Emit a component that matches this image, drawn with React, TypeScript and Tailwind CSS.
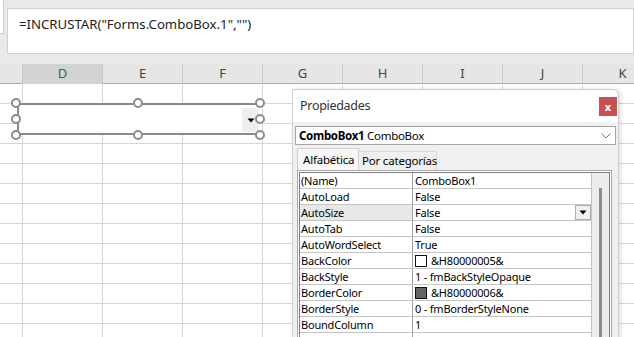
import React from "react";

const columns = ["", "D", "E", "F", "G", "H", "I", "J", "K"];

type Prop = { name: string; value: string; swatch?: string; selected?: boolean };

const props: Prop[] = [
  { name: "(Name)", value: "ComboBox1" },
  { name: "AutoLoad", value: "False" },
  { name: "AutoSize", value: "False", selected: true },
  { name: "AutoTab", value: "False" },
  { name: "AutoWordSelect", value: "True" },
  { name: "BackColor", value: "&H80000005&", swatch: "#ffffff" },
  { name: "BackStyle", value: "1 - fmBackStyleOpaque" },
  { name: "BorderColor", value: "&H80000006&", swatch: "#646464" },
  { name: "BorderStyle", value: "0 - fmBorderStyleNone" },
  { name: "BoundColumn", value: "1" },
  { name: "ColumnCount", value: "1" },
];

const handles = [
  [16, 103],
  [138, 103],
  [260, 103],
  [16, 119],
  [260, 119],
  [16, 135],
  [138, 135],
  [260, 135],
];

const DropTriangle = () => (
  <svg width="8" height="5" viewBox="0 0 8 5">
    <path d="M0.5 0.5h7L4 4.5z" fill="#000" />
  </svg>
);

const App = () => {
  return (
    <div className="relative w-[634px] h-[337px] overflow-hidden bg-white font-['Noto_Sans',sans-serif] text-black">
      {/* formula bar */}
      <div className="h-[64px] bg-[#e9e9e9] flex items-start">
        <div className="w-[4px] h-[34px] bg-white border-r border-b border-[#d0d0d0]" />
        <div className="ml-[3px] mt-[8px] w-[640px] h-[46px] bg-white border border-[#d0d0d0] pl-[11px] pt-[5px] text-[13.2px] leading-[20px] text-[#222]">
          =INCRUSTAR("Forms.ComboBox.1","")
        </div>
      </div>

      {/* column headers */}
      <div className="grid grid-cols-[23px_repeat(8,80px)] h-[20px] bg-[#e6e6e6] border-b border-[#ababab] text-[13px] text-[#444]">
        {columns.map((c) => (
          <div
            key={c || "c"}
            className={`flex items-center justify-center border-r border-[#c8c8c8] ${
              c === "D" ? "bg-[#d3d3d3] text-[#217346]" : ""
            }`}
          >
            {c}
          </div>
        ))}
      </div>

      {/* cells */}
      {Array.from({ length: 13 }).map((_, r) => (
        <div key={r} className="grid grid-cols-[23px_repeat(8,80px)] h-[20px] border-b border-[#d6d6d6]">
          {columns.map((c) => (
            <div key={c || "c"} className="border-r border-[#d6d6d6]" />
          ))}
        </div>
      ))}

      {/* embedded combobox control */}
      <div className="absolute left-[17px] top-[103px] w-[243px] h-[32px] bg-white border-t-2 border-l-2 border-b-2 border-[#8a8a8a]">
        <div className="absolute right-[1px] top-[3px] w-[17px] h-[24px] bg-[#eeeeee] flex items-center justify-center">
          <DropTriangle />
        </div>
      </div>
      {handles.map(([x, y]) => (
        <div
          key={`${x}-${y}`}
          className="absolute w-[10px] h-[10px] -ml-[5px] -mt-[5px] rounded-full bg-white border-2 border-[#8c8c8c]"
          style={{ left: x, top: y }}
        />
      ))}

      {/* properties window */}
      <div className="absolute left-[292px] top-[89px] w-[327px] h-[260px] flex flex-col border border-[#cfcfcf] rounded-tr-[6px] bg-[#f0f0f0] shadow-[2px_0_4px_rgba(0,0,0,0.12)]">
        <div className="h-[32px] shrink-0 bg-white rounded-tr-[6px] flex items-center justify-between pl-[7px] pr-[1px]">
          <span className="text-[12.5px] tracking-[-0.3px] text-[#333]">Propiedades</span>
          <div className="w-[18px] h-[19px] bg-[#c75050] flex items-center justify-center text-white text-[11px] font-bold leading-none">
            x
          </div>
        </div>

        <div className="px-[2px] pt-[4px] flex flex-col shrink-0 text-[11px] tracking-[-0.2px]">
          <div className="h-[19px] shrink-0 bg-white border border-[#a5a5a5] flex items-center justify-between pl-[3px] pr-[4px] text-[11.5px] tracking-[-0.3px]">
            <span>
              <b>ComboBox1</b> ComboBox
            </span>
            <svg width="10" height="6" viewBox="0 0 10 6">
              <path d="M0.5 0.5L5 5L9.5 0.5" fill="none" stroke="#777" strokeWidth="1" />
            </svg>
          </div>

          <div className="mt-[3px] ml-[2px] flex items-end h-[22px] shrink-0 whitespace-nowrap text-[11.5px]">
            <div className="h-[22px] w-[62px] bg-[#f7f7f7] border border-b-0 border-[#d0d0d0] pl-[5px] flex items-center">
              Alfabética
            </div>
            <div className="h-[19px] w-[78px] bg-[#f0f0f0] border border-l-0 border-b-0 border-[#d9d9d9] pl-[3px] flex items-center">
              Por categorías
            </div>
          </div>

          <div className="ml-[2px] w-[315px] h-[200px] shrink-0 border border-[#a8a8a8] bg-white p-[1px]">
            <div className="h-full border border-[#7d7d7d] flex">
              <div className="w-[292px] flex flex-col">
                {props.map((p) => (
                  <div key={p.name} className="h-[16px] shrink-0 flex border-b border-[#c4c4c4] leading-[15px]">
                    <div
                      className={`w-[113px] pl-[1px] border-r border-[#a0a0a0] whitespace-nowrap overflow-hidden ${
                        p.selected ? "bg-[#e8e8e8]" : ""
                      }`}
                    >
                      {p.name}
                    </div>
                    <div className="flex-1 flex items-center pl-[2px] border-r border-[#c4c4c4] relative whitespace-nowrap">
                      {p.swatch && (
                        <span
                          className="w-[12px] h-[12px] border border-[#111] mr-[4px] shrink-0"
                          style={{ background: p.swatch }}
                        />
                      )}
                      {p.value}
                      {p.selected && (
                        <div className="absolute right-0 top-0 w-[16px] h-[15px] bg-[#f0f0f0] border border-[#b0b0b0] flex items-center justify-center">
                          <DropTriangle />
                        </div>
                      )}
                    </div>
                  </div>
                ))}
              </div>
              <div className="w-[17px] bg-[#ececec] pt-[15px] pl-[7px]">
                <div className="w-[3px] h-full bg-[#8c8c8c]" />
              </div>
            </div>
          </div>
        </div>
      </div>
    </div>
  );
};

export default App;
